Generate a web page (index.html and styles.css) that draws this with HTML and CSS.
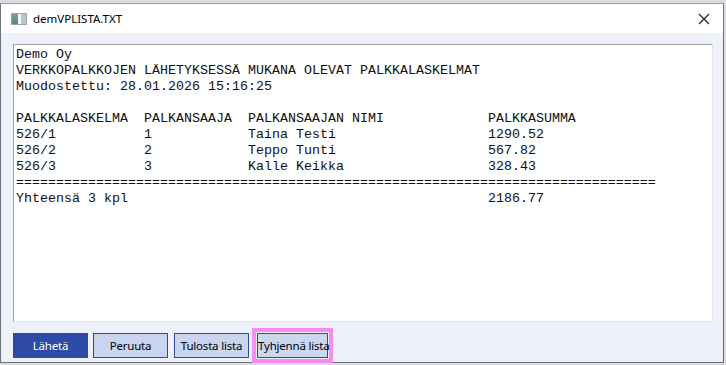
FILE: index.html
```html
<!DOCTYPE html>
<html lang="fi">
<head>
<meta charset="utf-8">
<title>demVPLISTA.TXT</title>
<link rel="stylesheet" href="styles.css">
</head>
<body>
<div class="window">
  <div class="titlebar">
    <svg class="app-icon" width="16" height="12" viewBox="0 0 16 12">
      <defs>
        <linearGradient id="g1" x1="0" y1="0" x2="0" y2="1">
          <stop offset="0" stop-color="#7f9aa8"/>
          <stop offset="1" stop-color="#5d8a6a"/>
        </linearGradient>
      </defs>
      <rect x="0.5" y="0.5" width="15" height="11" fill="#e8eef0" stroke="#9aa4aa"/>
      <rect x="1" y="1" width="6" height="10" fill="url(#g1)"/>
      <rect x="7" y="1" width="3" height="10" fill="#f4f7f8"/>
      <rect x="10" y="1" width="5" height="10" fill="#b9c6cf"/>
    </svg>
    <span class="title">demVPLISTA.TXT</span>
    <span class="spacer"></span>
    <svg class="close" width="12" height="12" viewBox="0 0 12 12">
      <path d="M1 1 L11 11 M11 1 L1 11" stroke="#1a1a1a" stroke-width="1.1" fill="none"/>
    </svg>
  </div>
  <div class="content">
    <pre class="listing">Demo Oy
VERKKOPALKKOJEN LÄHETYKSESSÄ MUKANA OLEVAT PALKKALASKELMAT
Muodostettu: 28.01.2026 15:16:25

PALKKALASKELMA  PALKANSAAJA  PALKANSAAJAN NIMI             PALKKASUMMA
526/1           1            Taina Testi                   1290.52
526/2           2            Teppo Tunti                   567.82
526/3           3            Kalle Keikka                  328.43
================================================================================
Yhteensä 3 kpl                                             2186.77</pre>
    <div class="buttons">
      <button class="btn primary">Lähetä</button>
      <button class="btn">Peruuta</button>
      <button class="btn">Tulosta lista</button>
      <span class="highlight"><button class="btn">Tyhjennä lista</button></span>
    </div>
  </div>
</div>
</body>
</html>
```

FILE: styles.css
```css
html, body {
  margin: 0;
  padding: 0;
}
body {
  background: #d9dbe0;
  width: 726px;
  height: 365px;
  padding-top: 3px;
  box-sizing: border-box;
  overflow: hidden;
  font-family: "Noto Sans", "Liberation Sans", sans-serif;
}
.window {
  width: 724px;
  height: 360px;
  box-sizing: border-box;
  border: 1px solid #6f7379;
  border-top-color: #9a9ea4;
  background: #eef1f9;
  display: flex;
  flex-direction: column;
}
.titlebar {
  height: 29px;
  background: #ffffff;
  display: flex;
  align-items: center;
  padding: 0 10px 0 10px;
  flex-shrink: 0;
}
.app-icon {
  margin-right: 6px;
}
.title {
  font-size: 11.5px;
  color: #000;
}
.spacer {
  flex: 1;
}
.close {
  margin-right: 3px;
}
.content {
  padding: 11px 10px 0 12px;
  display: flex;
  flex-direction: column;
}
.listing {
  margin: 0;
  width: 700px;
  height: 278px;
  box-sizing: border-box;
  background: #fff;
  border: 1px solid;
  border-color: #a0a0a0 #e3e3e3 #e3e3e3 #a0a0a0;
  padding: 2px 2px;
  font-family: "Liberation Mono", "Courier New", monospace;
  font-size: 13.333px;
  line-height: 16px;
  color: #111;
  overflow: hidden;
}
.buttons {
  display: flex;
  align-items: center;
  margin-top: 10px;
  height: 27px;
}
.btn {
  width: 75px;
  height: 25px;
  box-sizing: border-box;
  border: 1px solid #2e4ba3;
  background: #c9d5ef;
  color: #000;
  font-family: "Noto Sans", "Liberation Sans", sans-serif;
  font-size: 11.5px;
  letter-spacing: -0.2px;
  white-space: nowrap;
  padding: 0;
  margin-right: 5px;
}
.btn.primary {
  background: #2c4aa6;
  color: #fff;
}
.btn:nth-child(2) {
  margin-right: 6px;
}
.btn:nth-child(3) {
  margin-right: 3px;
}
.highlight {
  display: inline-flex;
  border: 4px solid #f78cf3;
  padding: 1px;
}
.highlight .btn {
  margin: 0;
  width: 71px;
  background: #ccd7ef;
}
```
